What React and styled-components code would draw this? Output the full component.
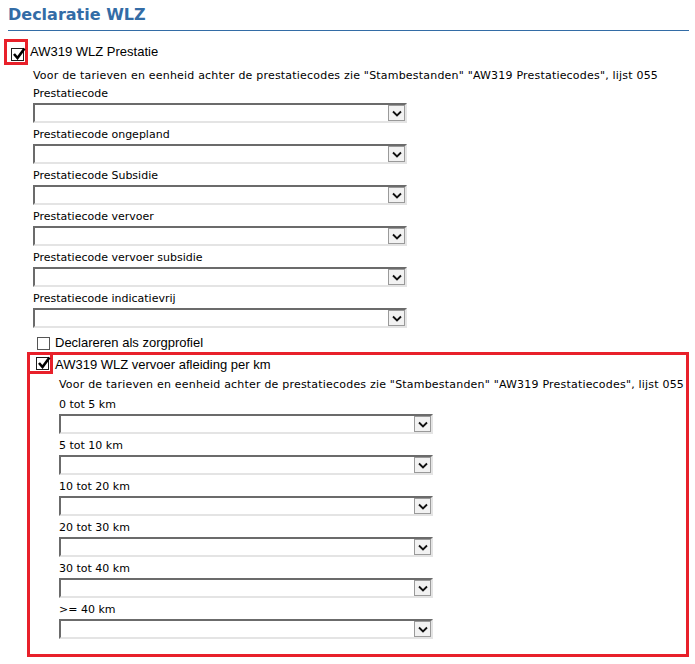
import React from "react";
import styled, { createGlobalStyle } from "styled-components";

const GlobalStyle = createGlobalStyle`
  body {
    margin: 0;
    background: #ffffff;
    font-family: "DejaVu Sans", Verdana, sans-serif;
    color: #000000;
  }
`;

const Page = styled.div`
  width: 695px;
  height: 664px;
  padding: 0 6px 0 8px;
  box-sizing: border-box;
  overflow: hidden;
`;

const Title = styled.h1`
  margin: 4px 0 0 0;
  padding-bottom: 4px;
  font-family: "DejaVu Sans", Verdana, sans-serif;
  font-size: 16px;
  line-height: 22px;
  font-weight: bold;
  color: #336ca6;
  border-bottom: 1px solid #336ca6;
`;

const CheckRow = styled.div`
  display: flex;
  align-items: center;
  margin-top: ${(p) => p.$top || 0}px;
  margin-left: ${(p) => p.$indent || 0}px;
`;

const Highlight = styled.span`
  display: inline-flex;
  border: 3px solid #e8202a;
  padding: ${(p) => p.$pad};
  margin: ${(p) => p.$margin};
`;

const Box = styled.span`
  width: 13px;
  height: 13px;
  box-sizing: border-box;
  border: 1px solid ${(p) => (p.$plain ? "#555" : "#1c1c1c")};
  background: #ffffff;
  display: inline-flex;
  position: relative;
`;

const Tick = () => (
  <svg width="14" height="13" viewBox="0 0 14 13" style={{ position: "absolute", left: 0, top: -2 }}>
    <path d="M2 7 L5.5 11 L12.5 1.5" fill="none" stroke="#000" strokeWidth="2.6" />
  </svg>
);

const CheckLabel = styled.span`
  margin-left: ${(p) => p.$gap || 2}px;
  font-family: "Liberation Sans", Arial, sans-serif;
  font-size: 13px;
  line-height: 16px;
  color: #000;
`;

const Fields = styled.div`
  margin-left: ${(p) => p.$indent}px;
`;

const Note = styled.div`
  margin-top: 4px;
  margin-bottom: ${(p) => p.$bottom || 4}px;
  font-size: 11px;
  line-height: 14px;
  letter-spacing: 0.2px;
  white-space: nowrap;
`;

const Field = styled.div`
  margin-bottom: 5px;
`;

const FieldLabel = styled.div`
  font-size: 11px;
  line-height: 14px;
  margin-bottom: 2px;
  white-space: nowrap;
`;

const Select = styled.div`
  width: 374px;
  height: 20px;
  box-sizing: border-box;
  border-style: solid;
  border-width: 2px;
  border-color: #6b6b6b #e4e4e4 #e4e4e4 #6b6b6b;
  background: #ffffff;
  display: flex;
  justify-content: flex-end;
  align-items: stretch;
`;

const ArrowButton = styled.span`
  width: 17px;
  box-sizing: border-box;
  border: 1px solid #9a9a9a;
  background: #f2f2f2;
  display: flex;
  align-items: center;
  justify-content: center;
`;

const Panel = styled.div`
  margin-left: 19px;
  margin-top: 1px;
  width: 662px;
  height: 305px;
  box-sizing: border-box;
  border: 3px solid #e8202a;
`;

const Chevron = () => (
  <svg width="10" height="7" viewBox="0 0 10 7">
    <path d="M1 1.5 L5 5.5 L9 1.5" fill="none" stroke="#111" strokeWidth="1.8" />
  </svg>
);

const NOTE =
  'Voor de tarieven en eenheid achter de prestatiecodes zie "Stambestanden" "AW319 Prestatiecodes", lijst 055';

const firstFields = [
  "Prestatiecode",
  "Prestatiecode ongepland",
  "Prestatiecode Subsidie",
  "Prestatiecode vervoer",
  "Prestatiecode vervoer subsidie",
  "Prestatiecode indicatievrij",
];

const kmFields = ["0 tot 5 km", "5 tot 10 km", "10 tot 20 km", "20 tot 30 km", "30 tot 40 km", ">= 40 km"];

const SelectField = ({ label }) => (
  <Field>
    <FieldLabel>{label}</FieldLabel>
    <Select>
      <ArrowButton>
        <Chevron />
      </ArrowButton>
    </Select>
  </Field>
);

export default function App() {
  return (
    <Page>
      <GlobalStyle />
      <Title>Declaratie WLZ</Title>

      <CheckRow $top={8}>
        <Highlight $pad="6px 1px 1px 4px" $margin="0 0 0 -4px">
          <Box>
            <Tick />
          </Box>
        </Highlight>
        <CheckLabel>AW319 WLZ Prestatie</CheckLabel>
      </CheckRow>

      <Fields $indent={25}>
        <Note>{NOTE}</Note>
        {firstFields.map((f) => (
          <SelectField key={f} label={f} />
        ))}
      </Fields>

      <CheckRow $top={7} $indent={29}>
        <Box $plain />
        <CheckLabel $gap={5}>Declareren als zorgprofiel</CheckLabel>
      </CheckRow>

      <Panel>
        <CheckRow>
          <Highlight $pad="2px 1px 1px 6px" $margin="-3px 0 0 -3px">
            <Box>
              <Tick />
            </Box>
          </Highlight>
          <CheckLabel>AW319 WLZ vervoer afleiding per km</CheckLabel>
        </CheckRow>
        <Fields $indent={29}>
          <Note $bottom={6}>{NOTE}</Note>
          {kmFields.map((f) => (
            <SelectField key={f} label={f} />
          ))}
        </Fields>
      </Panel>
    </Page>
  );
}
